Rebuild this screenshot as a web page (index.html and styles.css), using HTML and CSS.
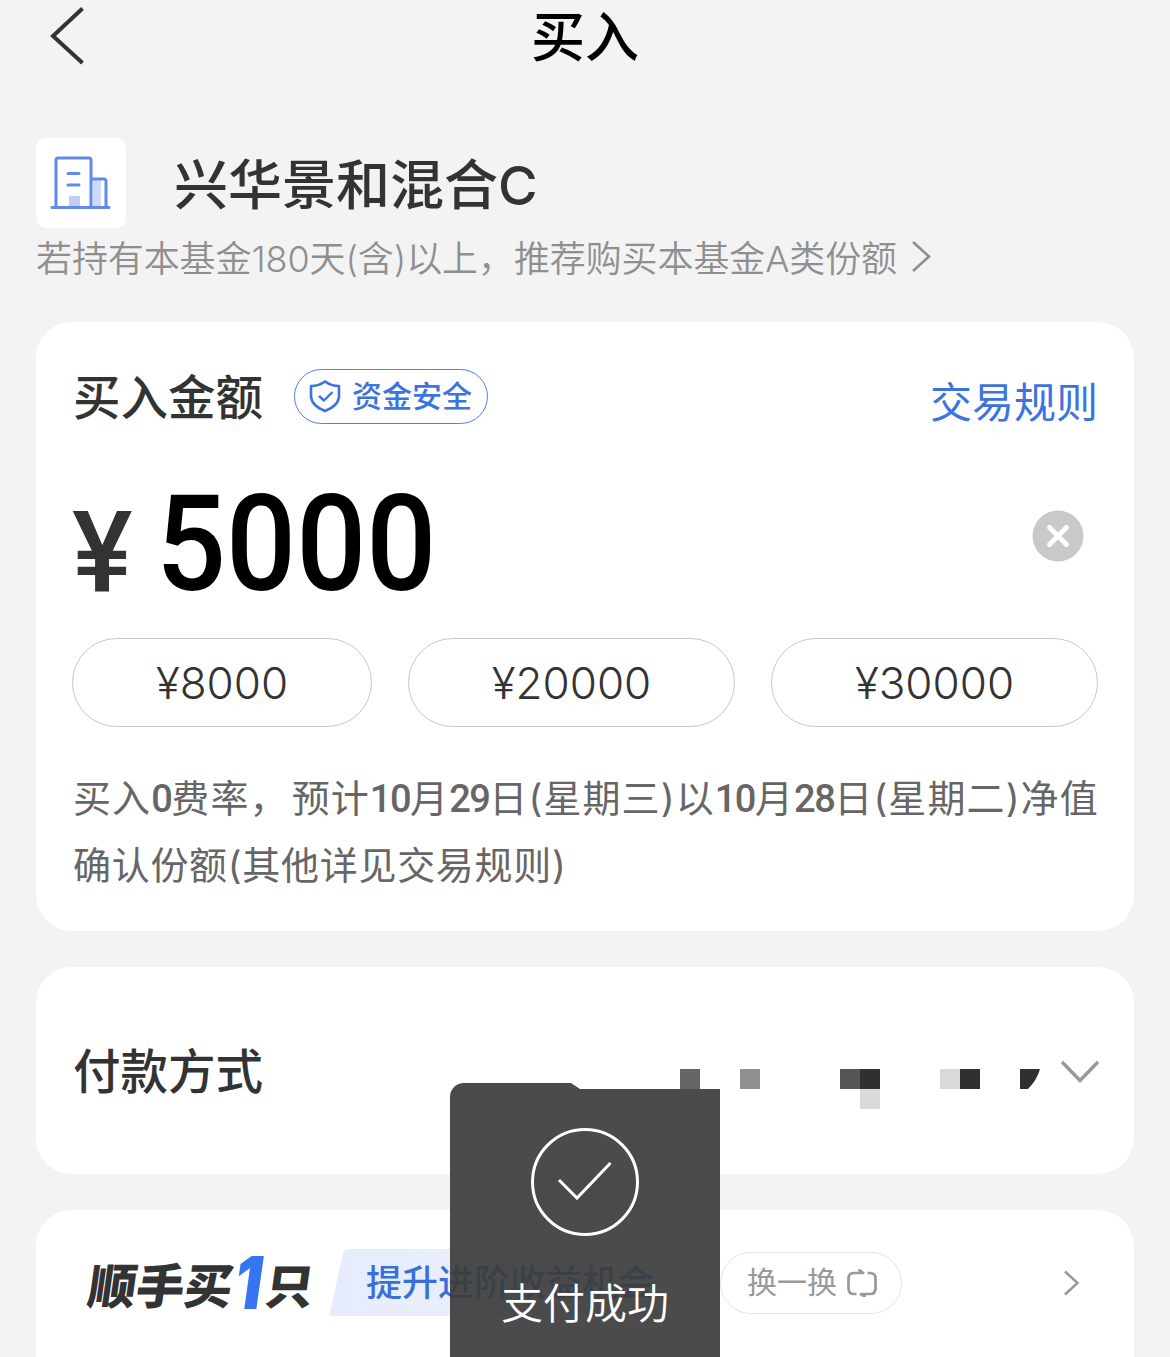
FILE: index.html
```html
<!DOCTYPE html>
<html lang="zh-CN">
<head>
<meta charset="utf-8">
<title>买入</title>
<link rel="stylesheet" href="styles.css">
</head>
<body>
<div class="page">
  <header class="nav">
    <svg class="nav-back" width="36" height="60" viewBox="0 0 36 60"><path d="M34.500 2.500 5 30 34.500 57"/></svg>
    <h1 class="nav-title">买入</h1>
  </header>

  <section class="fund">
    <div class="fund-head">
      <div class="fund-icon">
        <svg width="90" height="90" viewBox="0 0 90 90">
          <rect x="57" y="41" width="8" height="28" fill="#cdd9fa"/>
          <rect x="33" y="58" width="11" height="11" fill="#c3cdf3"/>
          <path d="M20 69V22q0-2 2-2H53q2 0 2 2V69M55 41H68q2 0 2 2V69M16 69.500H73M32 35.500H43M32 47H43" fill="none" stroke="#6289e8" stroke-width="3" stroke-linecap="round"/>
        </svg>
      </div>
      <h2 class="fund-name">兴华景和混合C</h2>
    </div>
    <p class="fund-tip"><span class="fund-tip-text">若持有本基金180天(含)以上，推荐购买本基金A类份额</span>
      <svg width="24" height="38" viewBox="0 0 24 38"><path d="M3 3 19 17.500 3 32" fill="none" stroke="#8f8f8f" stroke-width="2.600"/></svg>
    </p>
  </section>

  <section class="card amount">
    <div class="amount-head">
      <h3 class="label">买入金额</h3>
      <div class="safe">
        <svg width="32" height="34" viewBox="0 0 32 34" fill="none" stroke="#3b74de" stroke-width="2.600" stroke-linejoin="round"><path d="M16 2.500Q22 7 30 7V18Q29 27 16 32 3 27 2 18V7Q10 7 16 2.500Z"/><path d="M10 17 15 21.500 23.500 13" stroke-width="2.400"/></svg>
        <span>资金安全</span>
      </div>
      <a class="rules">交易规则</a>
    </div>
    <div class="amount-input">
      <span class="yen">¥</span>
      <span class="value">5000</span>
      <svg class="clear" width="52" height="52" viewBox="0 0 52 52"><circle cx="26" cy="26" r="25.500" fill="#c9c9c9"/><path d="M17.500 17.500 34.500 34.500M34.500 17.500 17.500 34.500" stroke="#fff" stroke-width="5" stroke-linecap="round"/></svg>
    </div>
    <div class="presets">
      <button class="preset">¥8000</button>
      <button class="preset">¥20000</button>
      <button class="preset">¥30000</button>
    </div>
    <p class="note">
      <span class="note-line first">买入<b>0</b>费率，<span class="after-comma">预计</span><b>10</b>月<b>29</b>日(星期三)以<b>10</b>月<b>28</b>日(星期二)净值</span>
      <span class="note-line">确认份额(其他详见交易规则)</span>
    </p>
  </section>

  <section class="card pay">
    <h3 class="label">付款方式</h3>
    <svg class="pay-mask" width="360" height="40" viewBox="0 0 360 40" shape-rendering="crispEdges">
      <rect width="20" height="20" fill="#666"/>
      <rect x="60" width="20" height="20" fill="#8f8f8f"/>
      <rect x="160" width="20" height="20" fill="#555"/>
      <rect x="180" width="20" height="20" fill="#303030"/>
      <rect x="180" y="20" width="20" height="20" fill="#d9d9d9"/>
      <rect x="260" width="20" height="20" fill="#d9d9d9"/>
      <rect x="280" width="20" height="20" fill="#303030"/>
      <path d="M340 0H360Q357 11 348 20H340Z" fill="#303030" shape-rendering="auto"/>
    </svg>
    <svg class="pay-arrow" width="38" height="26" viewBox="0 0 38 26"><path d="M1 3 19 21.500 37 3" fill="none" stroke="#999" stroke-width="3.400"/></svg>
  </section>

  <section class="card extra">
    <h3 class="slogan"><span>顺手买</span><em>1</em><span>只</span></h3>
    <div class="tag"><svg class="tag-bg" width="362" height="68" viewBox="0 0 362 68"><defs><linearGradient id="fade"><stop offset="0" stop-color="#e6ecfb"/><stop offset=".4" stop-color="#e9eefb"/><stop offset="1" stop-color="#f4f7fe"/></linearGradient></defs><path d="M20 0H358L342 67H3Q0 67 1 64L14 4Q15 0 20 0Z" fill="url(#fade)"/></svg><span class="tag-text">提升进阶收益机会</span></div>
    <div class="swap"><span>换一换</span>
      <svg width="32" height="28" viewBox="0 0 32 28" fill="none" stroke="#999" stroke-width="2.700"><path d="M10.500 25H8Q2.500 25 2.500 19.500V9.500Q2.500 4 8 4H17M12.500.5 18 4.500M21.500 4H24Q29.500 4 29.500 9.500V19.500Q29.500 25 24 25H15M19.500 28 14 24.500"/></svg>
    </div>
    <svg class="more" width="18" height="28" viewBox="0 0 18 28"><path d="M2 2.500 14.500 14 2 25.500" fill="none" stroke="#999" stroke-width="2.500"/></svg>
  </section>

  <div class="toast">
    <svg width="110" height="110" viewBox="0 0 110 110" fill="none" stroke="#fff" stroke-width="3"><circle cx="55" cy="55" r="52.500"/><path d="M29 53 47 71 80.500 36"/></svg>
    <span class="toast-text">支付成功</span>
  </div>
</div>
</body>
</html>
```
FILE: styles.css
```css
* { box-sizing: border-box; margin: 0; padding: 0; }
body { background: #f3f3f3; font-family: Inter, "Noto Sans CJK SC", sans-serif; color: #333; }
.page { position: relative; width: 1170px; height: 1357px; overflow: hidden; display: flex; flex-direction: column; }
svg { display: block; flex: none; }
h1, h2, h3 { font-weight: 500; white-space: nowrap; }

.nav { flex: none; height: 138px; padding: 6px 48px 0; display: grid; grid-template-columns: 36px 1fr 36px; align-items: start; }
.nav-back path { fill: none; stroke: #333; stroke-width: 4; }
.nav-title { font-size: 54px; line-height: 60px; padding-top: 2px; text-align: center; color: #000; }

.fund { flex: none; height: 184px; padding: 0 36px; }
.fund-head { display: flex; align-items: center; gap: 48px; height: 90px; }
.fund-icon { background: #fff; border-radius: 10px; }
.fund-name { font-size: 54px; line-height: 60px; padding-top: 6px; }
.fund-tip { display: flex; align-items: center; gap: 13px; height: 60px; font-size: 36px; font-weight: 350; line-height: 60px; letter-spacing: -.1px; color: #8f8f8f; white-space: nowrap; }
.fund-tip-text { padding-top: 2px; }

.card { background: #fff; border-radius: 36px; margin: 0 36px 36px; flex: none; }
.label { font-size: 47.500px; line-height: 60px; }

.amount { height: 609px; padding: 47px 36px 0; }
.amount-head { display: flex; align-items: center; height: 56px; padding-left: 1px; }
.amount-head .label { padding-top: 2px; }
.safe { display: flex; align-items: center; gap: 11px; width: 194px; height: 55px; margin: 0 0 2px 31px; padding-left: 14px; border: 1.500px solid #4f83e0; border-radius: 28px; color: #3b74de; font-size: 30px; font-weight: 500; line-height: 50px; white-space: nowrap; }
.rules { margin-left: auto; padding-top: 12px; font-size: 42px; line-height: 46px; color: #3b74de; }
.amount-input { display: flex; height: 213px; font-family: Roboto, sans-serif; font-weight: 500; }
.yen { width: 84px; font-size: 114px; line-height: 134px; padding-top: 61px; }
.value { font-size: 134px; line-height: 160px; padding-top: 40px; color: #000; transform: scaleX(.92); transform-origin: left; }
.clear { margin: 85px 14px 0 auto; }
.presets { display: grid; grid-template-columns: 300px 327px 327px; gap: 36px; height: 89px; }
.preset { font: 350 44px/80px Inter, sans-serif; color: #333; background: #fff; border: 1px solid #c8c8c8; border-radius: 45px; }
.note { padding: 38px 1px 0; font-size: 38px; line-height: 66px; color: #666; }
.note-line { display: block; white-space: nowrap; letter-spacing: .7px; }
.note-line.first { letter-spacing: 1.100px; }
.after-comma { margin-left: 3px; }
.note b { font-family: Roboto, sans-serif; font-weight: 500; letter-spacing: -1.500px; }

.pay { display: flex; height: 207px; padding: 0 35px 0 37px; align-items: flex-start; }
.pay .label { margin-top: 75px; }
.pay-mask { margin: 102px 21px 0 auto; }
.pay-arrow { margin-top: 92px; }

.extra { display: flex; align-items: flex-start; height: 220px; padding: 39px 53px 0 52px; }
.slogan { display: flex; align-items: baseline; width: 241px; margin-top: -1px; padding-left: 1px; font-size: 48px; line-height: 68px; font-weight: 900; transform: skewX(-8deg); }
.slogan em { font-family: Inter, sans-serif; font-size: 73px; line-height: 60px; font-style: normal; color: #3775f0; width: 33px; transform: translate(2px, 5px) scaleX(.84); transform-origin: left; }
.tag { display: grid; width: 362px; }
.tag-bg, .tag-text { grid-area: 1 / 1; }
.tag-text { padding-left: 37px; font-size: 36px; line-height: 69px; font-weight: 500; color: #3b6fd8; white-space: nowrap; }
.swap { display: flex; align-items: center; gap: 9px; width: 182px; height: 62px; margin: 3px 0 0 29px; padding-left: 26px; border: 1px solid #e3e3e3; border-radius: 31px; font-size: 30px; color: #999; white-space: nowrap; }
.swap span { padding-bottom: 6px; }
.more { margin: 20px 0 0 auto; }

.toast { position: absolute; left: 450px; top: 1083px; width: 270px; height: 274px; padding-top: 44px; display: flex; flex-direction: column; align-items: center; background: rgba(60, 60, 60, .92); border-top-left-radius: 14px; clip-path: polygon(0 0, 121px 0, 130px 6px, 270px 6px, 270px 100%, 0 100%); color: #fff; }
.toast-text { margin-top: 37px; font-size: 42px; line-height: 60px; font-weight: 350; }
```
